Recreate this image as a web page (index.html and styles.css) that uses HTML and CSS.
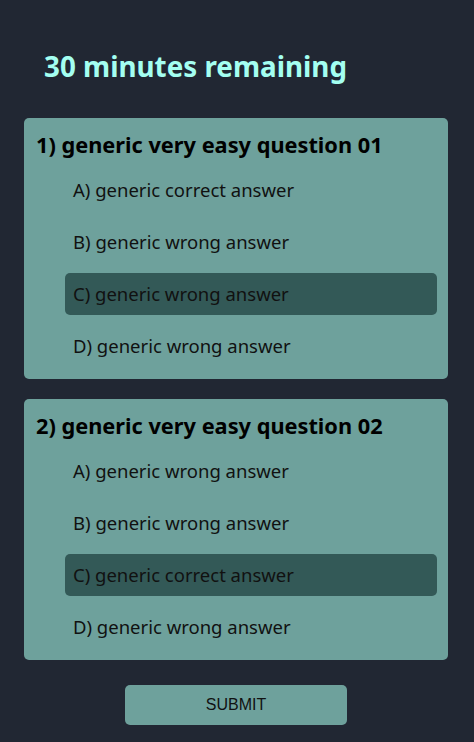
FILE: index.html
```html
<!DOCTYPE html>
<html>
<head>
<meta charset="utf-8">
<link rel="stylesheet" href="styles.css">
</head>
<body>
<main class="page">
  <h1 class="timer">30 minutes remaining</h1>
  <section class="card">
    <h2 class="question">1) generic very easy question 01</h2>
    <ul class="answers">
      <li class="answer">A) generic correct answer</li>
      <li class="answer">B) generic wrong answer</li>
      <li class="answer selected">C) generic wrong answer</li>
      <li class="answer">D) generic wrong answer</li>
    </ul>
  </section>
  <section class="card">
    <h2 class="question">2) generic very easy question 02</h2>
    <ul class="answers">
      <li class="answer">A) generic wrong answer</li>
      <li class="answer">B) generic wrong answer</li>
      <li class="answer selected">C) generic correct answer</li>
      <li class="answer">D) generic wrong answer</li>
    </ul>
  </section>
  <div class="actions">
    <button class="submit">SUBMIT</button>
  </div>
</main>
</body>
</html>
```

FILE: styles.css
```css
html, body {
  margin: 0;
  padding: 0;
  background: #212733;
  height: 100%;
}
body {
  font-family: "Noto Sans", "Open Sans", sans-serif;
}
.page {
  padding: 44px 26px 0 24px;
  display: flex;
  flex-direction: column;
  gap: 20px;
}
.timer {
  margin: 0 0 0 20px;
  font-size: 27.8px;
  font-weight: 700;
  color: #a4fff1;
  line-height: 44px;
  height: 54px;
}
.card {
  background: #6ea19c;
  border-radius: 5px;
  padding: 12px 11px 12px 12px;
}
.question {
  margin: 0;
  font-size: 21.75px;
  font-weight: 700;
  color: #000;
  line-height: 30px;
  margin-bottom: 9px;
}
.answers {
  list-style: none;
  margin: 0;
  padding: 0 0 0 29px;
  display: flex;
  flex-direction: column;
  gap: 10px;
}
.answer {
  height: 42px;
  line-height: 42px;
  padding: 0 8px;
  font-size: 18.5px;
  color: #111;
  border-radius: 5px;
}
.answer.selected {
  background: #335957;
}
.actions {
  display: flex;
  justify-content: center;
  margin-top: 5px;
}
.submit {
  width: 222px;
  height: 40px;
  background: #6ea19c;
  border: none;
  border-radius: 5px;
  font-family: "Liberation Sans", Arial, sans-serif;
  font-size: 16px;
  color: #111;
}
```
